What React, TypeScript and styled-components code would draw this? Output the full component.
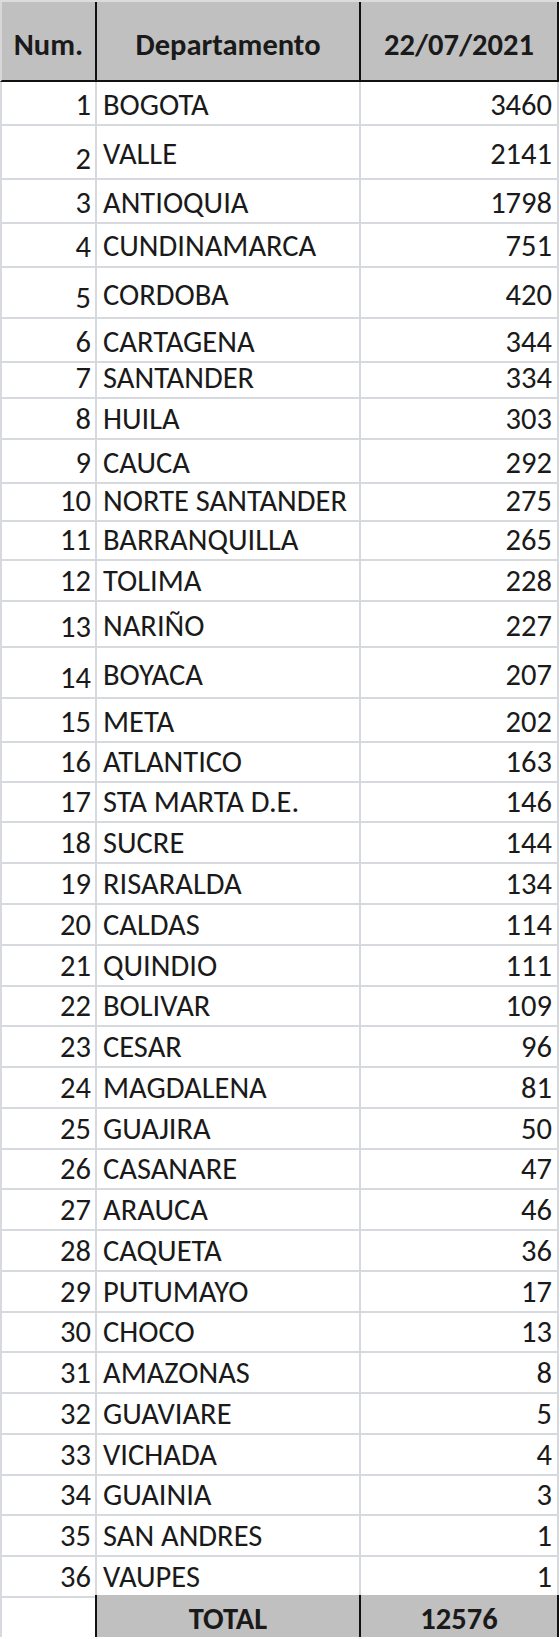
import React from 'react';
import styled, { createGlobalStyle, css } from 'styled-components';

const GRID = '#d6d9dd';
const INK = '#1a1a1a';
const HEAD_BG = '#c0c0c0';

const GlobalStyle = createGlobalStyle`
  html, body {
    margin: 0;
    padding: 0;
    background: #ffffff;
  }
  body {
    font-family: Carlito, Lato, 'Liberation Sans', sans-serif;
    color: ${INK};
  }
`;

const rows: [number, string, number, number][] = [
  [1, 'BOGOTA', 3460, 43],
  [2, 'VALLE', 2141, 55],
  [3, 'ANTIOQUIA', 1798, 42],
  [4, 'CUNDINAMARCA', 751, 46],
  [5, 'CORDOBA', 420, 51],
  [6, 'CARTAGENA', 344, 36],
  [7, 'SANTANDER', 334, 40],
  [8, 'HUILA', 303, 45],
  [9, 'CAUCA', 292, 38],
  [10, 'NORTE SANTANDER', 275, 39],
  [11, 'BARRANQUILLA', 265, 41],
  [12, 'TOLIMA', 228, 43],
  [13, 'NARIÑO', 227, 47],
  [14, 'BOYACA', 207, 51],
  [15, 'META', 202, 40],
  [16, 'ATLANTICO', 163, 40],
  [17, 'STA MARTA D.E.', 146, 41],
  [18, 'SUCRE', 144, 41],
  [19, 'RISARALDA', 134, 41],
  [20, 'CALDAS', 114, 41],
  [21, 'QUINDIO', 111, 40],
  [22, 'BOLIVAR', 109, 41],
  [23, 'CESAR', 96, 41],
  [24, 'MAGDALENA', 81, 41],
  [25, 'GUAJIRA', 50, 40],
  [26, 'CASANARE', 47, 41],
  [27, 'ARAUCA', 46, 41],
  [28, 'CAQUETA', 36, 41],
  [29, 'PUTUMAYO', 17, 40],
  [30, 'CHOCO', 13, 41],
  [31, 'AMAZONAS', 8, 41],
  [32, 'GUAVIARE', 5, 41],
  [33, 'VICHADA', 4, 40],
  [34, 'GUAINIA', 3, 41],
  [35, 'SAN ANDRES', 1, 41],
  [36, 'VAUPES', 1, 41],
];

const Sheet = styled.div`
  width: 559px;
  border-top: 2px solid #dcdcdc;
  font-size: 30.5px;
  line-height: 1.2;
`;

const Row = styled.div<{ $h: number }>`
  display: grid;
  grid-template-columns: 97px 264px 198px;
  height: ${p => p.$h}px;
`;

const cellBase = css`
  display: flex;
  align-items: center;
  box-sizing: border-box;
  min-width: 0;
  white-space: nowrap;
  border-right: 2px solid ${GRID};
  border-bottom: 2px solid ${GRID};
`;

const HeadCell = styled.div<{ $first?: boolean }>`
  ${cellBase};
  justify-content: center;
  padding-top: 9px;
  background: ${HEAD_BG};
  font-weight: 700;
  border-right-color: #111;
  border-bottom-color: #111;
  ${p => p.$first && css`border-left: 2px solid #d8d8d8;`}
`;

const NumCell = styled.div<{ $plain?: boolean }>`
  ${cellBase};
  align-items: flex-end;
  justify-content: flex-end;
  padding: 0 4px 0 0;
  border-left: 2px solid ${GRID};
  ${p => p.$plain && css`
    border-bottom: none;
    border-right-color: #111;
  `}
`;

const NameCell = styled.div<{ $edge?: boolean }>`
  ${cellBase};
  padding: 5px 0 0 6px;
  ${p => p.$edge && css`border-bottom-color: #111;`}
`;

const ValueCell = styled.div<{ $edge?: boolean }>`
  ${cellBase};
  justify-content: flex-end;
  padding: 5px 5px 0 0;
  ${p => p.$edge && css`border-bottom-color: #111;`}
`;

const TotalCell = styled.div`
  ${cellBase};
  justify-content: center;
  padding-top: 6px;
  background: ${HEAD_BG};
  font-weight: 700;
  border-right-color: #111;
  border-bottom-color: #111;
`;

export default function App() {
  const total = rows.reduce((s, r) => s + r[2], 0);
  return (
    <>
      <GlobalStyle />
      <Sheet>
        <Row $h={80}>
          <HeadCell $first>Num.</HeadCell>
          <HeadCell>Departamento</HeadCell>
          <HeadCell>22/07/2021</HeadCell>
        </Row>
        {rows.map(([n, name, value, h], i) => {
          const last = i === rows.length - 1;
          return (
            <Row key={n} $h={h}>
              <NumCell>{n}</NumCell>
              <NameCell $edge={last}>{name}</NameCell>
              <ValueCell $edge={last}>{value}</ValueCell>
            </Row>
          );
        })}
        <Row $h={42}>
          <NumCell $plain />
          <TotalCell>TOTAL</TotalCell>
          <TotalCell>{total}</TotalCell>
        </Row>
      </Sheet>
    </>
  );
}
